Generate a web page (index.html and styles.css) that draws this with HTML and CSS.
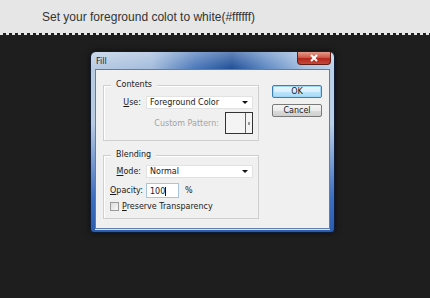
FILE: index.html
```html
<!DOCTYPE html>
<html lang="en">
<head>
    <meta charset="UTF-8">
    <title>Fill</title>
    <link rel="stylesheet" href="styles.css">
</head>
<body>
    <div class="banner">
        <p>Set your foreground colot to white(#ffffff)</p>
    </div>
    <div class="edge"></div>

    <div class="stage">
        <div class="window">
            <div class="titlebar">
                <span class="title">Fill</span>
                <div class="close">
                    <svg width="10" height="8" viewBox="0 0 10 8">
                        <path d="M2 1 L8 7 M8 1 L2 7" stroke="#fff" stroke-width="2" fill="none"/>
                    </svg>
                </div>
            </div>

            <div class="client">
                <div class="groups">
                    <!-- Contents -->
                    <div class="group contents">
                        <span class="legend">Contents</span>
                        <div class="row">
                            <label><u>U</u>se:</label>
                            <div class="select">Foreground Color<span class="arrow"></span></div>
                        </div>
                        <div class="pattern">
                            <span class="dim">Custom Pattern:</span>
                            <div class="swatch"><span class="swatch-btn"></span></div>
                        </div>
                    </div>

                    <!-- Blending -->
                    <div class="group blending">
                        <span class="legend">Blending</span>
                        <div class="row">
                            <label><u>M</u>ode:</label>
                            <div class="select">Normal<span class="arrow"></span></div>
                        </div>
                        <div class="row">
                            <label><u>O</u>pacity:</label>
                            <div class="opacity">
                                <div class="input">100<span class="caret"></span></div>
                                <span class="unit">%</span>
                            </div>
                        </div>
                        <div class="check">
                            <span class="box"></span>
                            <span><u>P</u>reserve Transparency</span>
                        </div>
                    </div>
                </div>

                <div class="buttons">
                    <div class="btn default">OK</div>
                    <div class="btn">Cancel</div>
                </div>
            </div>
        </div>
    </div>
</body>
</html>
```

FILE: styles.css
```css
body {
    margin: 0;
    padding: 0;
    background-color: #1e1e1e;
    font-family: "DejaVu Sans", Verdana, sans-serif;
    height: 298px;
    overflow: hidden;
}
.banner {
    height: 33px;
    background-color: #e6e6e6;
}
.banner p {
    margin: 0;
    padding: 10px 0 0 42px;
    font-family: "Liberation Sans", Arial, sans-serif;
    font-size: 12px;
    color: #333;
}
.edge {
    height: 2px;
    background: repeating-linear-gradient(90deg, #e6e6e6 0 3px, #1e1e1e 3px 6px);
}
.stage {
    padding: 16px 0 0 90px;
}
.window {
    width: 245px;
    height: 182px;
    box-sizing: border-box;
    padding: 0 4px 4px 4px;
    border-radius: 6px 6px 4px 4px;
    border: 1px solid #0f1c33;
    background: linear-gradient(180deg, rgba(255,255,255,0.3) 0, rgba(255,255,255,0) 17px, rgba(60,105,185,0) 40%, #3f6fc0 80%, #2b5cae 100%),
                linear-gradient(90deg, #b8cbe3 0%, #a3bcdc 25%, #4a78ba 43%, #1f4f98 58%, #5f8ac4 72%, #a6c0e0 88%, #bcd0e8 100%);
    box-shadow: 0 0 6px rgba(0, 0, 0, 0.6);
}
.titlebar {
    height: 17px;
    display: flex;
    justify-content: space-between;
    align-items: flex-start;
}
.title {
    font-size: 8px;
    color: #15233a;
    padding: 5px 0 0 1px;
}
.close {
    width: 34px;
    height: 13px;
    margin-right: -1px;
    border: 1px solid #5b1e18;
    border-top: none;
    border-radius: 0 0 4px 4px;
    background: linear-gradient(180deg, #e49a8c 0%, #d05a48 45%, #b2271a 55%, #c9483a 100%);
    display: flex;
    align-items: center;
    justify-content: center;
    box-sizing: border-box;
}
.client {
    height: 160px;
    box-sizing: border-box;
    background-color: #f0f0f0;
    border: 1px solid #5e7da8;
    box-shadow: 0 1px 0 #dbe6f4;
    display: flex;
    padding: 15px 0 0 7px;
    font-size: 8px;
    color: #1a1a1a;
}
.groups {
    width: 156px;
}
.group {
    position: relative;
    border: 1px solid #cfcfcf;
    box-shadow: inset 1px 1px 0 #fff;
    box-sizing: border-box;
    padding: 10px 5px 0 6px;
}
.contents {
    height: 56px;
}
.blending {
    height: 64px;
    margin-top: 14px;
    padding-top: 9px;
}
.legend {
    position: absolute;
    top: -6px;
    left: 7px;
    padding: 0 5px;
    background-color: #f0f0f0;
    color: #1a1a1a;
}
.row {
    display: flex;
    align-items: center;
    height: 13px;
    margin-bottom: 6px;
}
.row label {
    width: 31px;
    text-align: right;
    margin-right: 5px;
}
.select {
    flex: 1;
    height: 13px;
    box-sizing: border-box;
    background-color: #fff;
    border: 1px solid #e2e2e2;
    padding: 0 0 0 3px;
    display: flex;
    align-items: center;
    justify-content: space-between;
}
.arrow {
    width: 0;
    height: 0;
    margin-right: 4px;
    border-left: 3px solid transparent;
    border-right: 3px solid transparent;
    border-top: 3px solid #111;
}
.pattern {
    display: flex;
    justify-content: flex-end;
    align-items: center;
    margin-top: -3px;
}
.dim {
    color: #a3a3a3;
    margin-right: 6px;
}
.swatch {
    width: 28px;
    height: 22px;
    box-sizing: border-box;
    border: 1px solid #333;
    background-color: #f4f4f4;
    display: flex;
    justify-content: flex-end;
}
.swatch-btn {
    width: 6px;
    border-left: 1px solid #666;
    background: linear-gradient(180deg, transparent 45%, #999 45%, #999 60%, transparent 60%) no-repeat center / 2px 100%;
}
.opacity {
    display: flex;
    align-items: center;
}
.input {
    width: 33px;
    height: 15px;
    box-sizing: border-box;
    background-color: #fff;
    border: 1px solid #a9c4de;
    padding: 1px 0 0 3px;
    display: flex;
    align-items: center;
}
.caret {
    width: 1px;
    height: 9px;
    background-color: #111;
}
.unit {
    margin-left: 6px;
}
.check {
    display: flex;
    align-items: center;
    margin-top: -1px;
}
.box {
    width: 9px;
    height: 9px;
    box-sizing: border-box;
    border: 1px solid #9a9a9a;
    background: linear-gradient(135deg, #dcdcdc, #f8f8f8);
    margin-right: 3px;
}
.buttons {
    margin-left: 13px;
    display: flex;
    flex-direction: column;
    gap: 6px;
}
.btn {
    width: 50px;
    height: 13px;
    box-sizing: border-box;
    border: 1px solid #7a7a7a;
    border-radius: 2px;
    background: linear-gradient(180deg, #f4f4f4 0%, #ebebeb 50%, #dcdcdc 51%, #cfcfcf 100%);
    text-align: center;
    font-size: 8px;
    line-height: 11px;
}
.btn.default {
    border-color: #3c7fb1;
    box-shadow: inset 0 0 0 1px #9fd5f4;
    background: linear-gradient(180deg, #eaf6fd 0%, #d9f0fc 50%, #bee6fd 51%, #a7d9f5 100%);
}
```
